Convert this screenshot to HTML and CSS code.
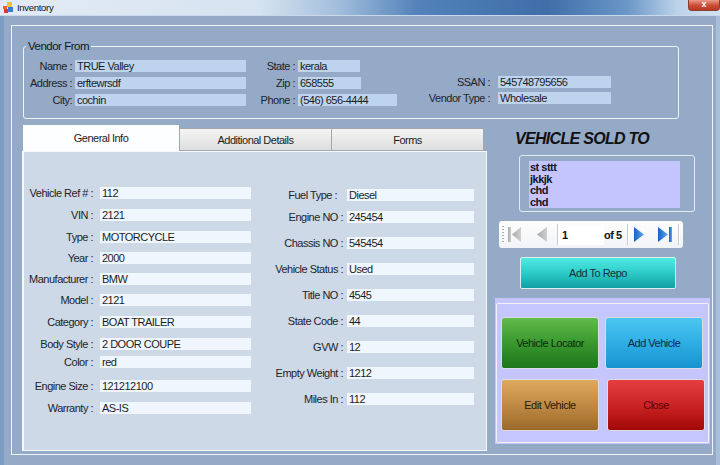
FILE: index.html
```html
<!DOCTYPE html>
<html>
<head>
<meta charset="utf-8">
<title>Inventory</title>
<link rel="stylesheet" href="styles.css">
</head>
<body>
<div class="window">
  <div class="titlebar">
    <svg class="appicon" width="11" height="11" viewBox="0 0 11 11">
      <rect x="0" y="4" width="4" height="3" fill="#e8602a"/>
      <rect x="4" y="0" width="5" height="5" fill="#f2c230"/>
      <rect x="1" y="7" width="4" height="4" fill="#d83a2a"/>
      <rect x="5" y="5" width="5" height="5" fill="#3a7ad8"/>
    </svg>
    <span class="title">Inventory</span>
    <div class="closebtn">x</div>
  </div>
  <div class="client">
    <div class="panel">
      <div class="group">
        <div class="legend">Vendor From</div>
        <div class="vrows">
          <div class="vcol c1">
            <span class="lbl">Name :</span><span class="vf">TRUE Valley</span>
            <span class="lbl">Address :</span><span class="vf">erftewrsdf</span>
            <span class="lbl">City:</span><span class="vf">cochin</span>
          </div>
          <div class="vcol c2">
            <span class="lbl">State :</span><span class="vf w62">kerala</span>
            <span class="lbl">Zip :</span><span class="vf w63">658555</span>
            <span class="lbl">Phone :</span><span class="vf w99">(546) 656-4444</span>
          </div>
          <div class="vcol c3">
            <span class="lbl">SSAN :</span><span class="vf">545748795656</span>
            <span class="lbl">Vendor Type :</span><span class="vf">Wholesale</span>
          </div>
        </div>
      </div>

      <div class="main">
        <div class="tabctl">
          <div class="tabstrip">
            <div class="tab active">General Info</div>
            <div class="tab t2">Additional Details</div>
            <div class="tab t3">Forms</div>
          </div>
          <div class="tabpage">
            <div class="pcol left">
              <div class="prow"><span class="plbl">Vehicle Ref # :</span><span class="pf">112</span></div>
              <div class="prow"><span class="plbl">VIN :</span><span class="pf">2121</span></div>
              <div class="prow"><span class="plbl">Type :</span><span class="pf">MOTORCYCLE</span></div>
              <div class="prow up1"><span class="plbl">Year :</span><span class="pf">2000</span></div>
              <div class="prow up1"><span class="plbl">Manufacturer :</span><span class="pf">BMW</span></div>
              <div class="prow up1"><span class="plbl">Model :</span><span class="pf">2121</span></div>
              <div class="prow"><span class="plbl">Category :</span><span class="pf">BOAT TRAILER</span></div>
              <div class="prow"><span class="plbl">Body Style :</span><span class="pf">2 DOOR COUPE</span></div>
              <div class="prow up4"><span class="plbl">Color :</span><span class="pf">red</span></div>
              <div class="prow dn2"><span class="plbl">Engine Size :</span><span class="pf">121212100</span></div>
              <div class="prow"><span class="plbl">Warranty :</span><span class="pf">AS-IS</span></div>
            </div>
            <div class="pcol right">
              <div class="prow"><span class="plbl pr">Fuel Type :</span><span class="pf">Diesel</span></div>
              <div class="prow up4"><span class="plbl">Engine NO :</span><span class="pf">245454</span></div>
              <div class="prow"><span class="plbl">Chassis NO :</span><span class="pf">545454</span></div>
              <div class="prow"><span class="plbl">Vehicle Status :</span><span class="pf">Used</span></div>
              <div class="prow"><span class="plbl">Title NO :</span><span class="pf">4545</span></div>
              <div class="prow"><span class="plbl">State Code :</span><span class="pf">44</span></div>
              <div class="prow"><span class="plbl">GVW :</span><span class="pf">12</span></div>
              <div class="prow"><span class="plbl">Empty Weight :</span><span class="pf">1212</span></div>
              <div class="prow"><span class="plbl">Miles In :</span><span class="pf">112</span></div>
            </div>
          </div>
        </div>

        <div class="side">
          <div class="sold">VEHICLE SOLD TO</div>
          <div class="listgrp">
            <div class="list">
              <div>st sttt</div>
              <div>jkkjk</div>
              <div>chd</div>
              <div>chd</div>
            </div>
          </div>
          <div class="nav">
            <span class="grip"></span>
            <svg class="ic first" width="14" height="15" viewBox="0 0 14 15">
              <defs><linearGradient id="g1" x1="0" y1="0" x2="1" y2="0"><stop offset="0" stop-color="#a9a9a9"/><stop offset="1" stop-color="#cfcfcf"/></linearGradient></defs>
              <rect x="0" y="0" width="3" height="15" fill="url(#g1)"/>
              <polygon points="13,0 4,7.5 13,15" fill="url(#g1)"/>
            </svg>
            <svg class="ic prev" width="10" height="15" viewBox="0 0 10 15">
              <polygon points="10,0 0,7.5 10,15" fill="url(#g1)"/>
            </svg>
            <span class="sep"></span>
            <span class="pos">1</span>
            <span class="of">of 5</span>
            <span class="sep s2"></span>
            <svg class="ic next" width="10" height="15" viewBox="0 0 10 15">
              <defs><linearGradient id="g2" x1="0" y1="0" x2="1" y2="0"><stop offset="0" stop-color="#1c5fc0"/><stop offset="1" stop-color="#5aa8ee"/></linearGradient></defs>
              <polygon points="0,0 10,7.5 0,15" fill="url(#g2)"/>
            </svg>
            <svg class="ic last" width="14" height="15" viewBox="0 0 14 15">
              <polygon points="0,0 10,7.5 0,15" fill="url(#g2)"/>
              <rect x="11" y="0" width="3" height="15" fill="url(#g2)"/>
            </svg>
            <span class="sep s3"></span>
          </div>
          <div class="addrepo">Add To Repo</div>
          <div class="btnpanel">
            <div class="btngrid">
              <div class="btn green">Vehicle Locator</div>
              <div class="btn blue">Add Vehicle</div>
              <div class="btn tan">Edit Vehicle</div>
              <div class="btn red">Close</div>
            </div>
          </div>
        </div>
      </div>
    </div>
  </div>
</div>
</body>
</html>
```

FILE: styles.css
```css
* { box-sizing: border-box; }

html, body {
  margin: 0;
  padding: 0;
}

body {
  width: 720px;
  height: 465px;
  overflow: hidden;
  font-family: "Liberation Sans", Arial, sans-serif;
  font-size: 11px;
  letter-spacing: -0.5px;
  color: #1c1c1c;
  background: #95aac7;
}

.window {
  width: 720px;
  height: 465px;
  display: flex;
  flex-direction: column;
}

/* ---------- title bar ---------- */
.titlebar {
  height: 16px;
  flex: none;
  display: flex;
  align-items: center;
  background: linear-gradient(90deg, #e2ebf5 0%, #d6e3f0 36%, #a2bedd 47%, #5282b9 58%, #3f6ea8 76%, #6a96c8 87%, #bcd2ea 94%, #d3e2f1 100%);
  border-bottom: 1px solid #c9d8ea;
}

.appicon {
  margin-left: 3px;
  flex: none;
}

.title {
  margin-left: 3px;
  font-size: 9.5px;
  letter-spacing: -0.3px;
  color: #111;
}

.closebtn {
  margin-left: auto;
  align-self: flex-start;
  width: 32px;
  height: 11px;
  border: 1px solid #8c3c2c;
  border-top: none;
  border-radius: 0 0 4px 4px;
  background: linear-gradient(#e89a86, #cc4c36 55%, #b63a24);
  color: #fff;
  font-weight: bold;
  font-size: 9px;
  line-height: 9px;
  text-align: center;
  letter-spacing: 0;
}

/* ---------- client area ---------- */
.client {
  flex: 1;
  background: #95aac7;
  border-left: 4px solid #7f9dc3;
  border-right: 4px solid #a8bfd9;
  padding-top: 9px;
}

.panel {
  margin-left: 7px;
  width: 702px;
  border: 1px solid #eef3f8;
  padding-bottom: 3px;
}

/* ---------- vendor group ---------- */
.group {
  margin: 20px 0 0 11px;
  width: 656px;
  border: 1px solid #eef3f8;
  border-radius: 3px;
  padding-bottom: 12px;
}

.legend {
  width: max-content;
  height: 13px;
  line-height: 13px;
  margin: -7px 0 0 2px;
  padding: 0 2px;
  background: #95aac7;
  color: #141414;
  font-size: 11.5px;
}

.vrows {
  margin-top: 7px;
  display: flex;
  align-items: flex-start;
}

.vcol {
  display: grid;
  grid-auto-rows: 12px;
  row-gap: 5px;
  column-gap: 3px;
  align-items: center;
}

.c1 { grid-template-columns: 48px 171px; }
.c2 { grid-template-columns: 45px 99px; margin-left: 4px; }
.c3 { grid-template-columns: 70px 113px; column-gap: 8px; row-gap: 4px; margin-left: 23px; margin-top: 16px; }

.lbl {
  text-align: right;
  white-space: nowrap;
  line-height: 12px;
  color: #1e232a;
}

.vf {
  height: 12px;
  line-height: 12px;
  padding-left: 2px;
  background: #bdd3ee;
  white-space: nowrap;
  color: #1a1e24;
}

.w62 { width: 62px; }
.w63 { width: 63px; }
.w99 { width: 99px; }

/* ---------- main row ---------- */
.main {
  display: flex;
  align-items: flex-start;
}

.tabctl {
  margin: 6px 0 0 10px;
  width: 465px;
  flex: none;
}

.tabstrip {
  height: 26px;
  display: flex;
  align-items: flex-end;
  padding-left: 1px;
}

.tab {
  height: 23px;
  display: flex;
  align-items: center;
  justify-content: center;
  color: #1c1c1c;
  padding-top: 1px;
}

.tab.active {
  width: 156px;
  height: 26px;
  background: #fdfeff;
  padding-top: 0;
}

.tab.t2 {
  width: 153px;
  border: 1px solid #a3a6aa;
  background: linear-gradient(#f4f4f4, #dedede);
}

.tab.t3 {
  width: 152px;
  border: 1px solid #a3a6aa;
  border-left: none;
  background: linear-gradient(#f4f4f4, #dedede);
}

.tabpage {
  height: 300px;
  background: #cdd9e6;
  border: 1px solid #f6f9fc;
  border-left: 2px solid #f6f9fc;
  padding: 35px 0 0 1px;
  display: flex;
  align-items: flex-start;
}

.pcol {
  display: flex;
  flex-direction: column;
  gap: 10px;
}

.pcol.right {
  gap: 14px;
  margin: 2px 0 0 12px;
}

.prow {
  height: 12px;
  display: flex;
  align-items: center;
}

.up1 { margin-top: -1px; }
.up4 { margin-top: -4px; }
.dn2 { margin-top: 2px; }

.plbl {
  width: 68px;
  text-align: right;
  white-space: nowrap;
  line-height: 12px;
  color: #1e232a;
}

.pf {
  width: 151px;
  margin-left: 7px;
  height: 12px;
  line-height: 12px;
  padding-left: 2px;
  background: #eff6fd;
  white-space: nowrap;
  color: #1a1e24;
}

.right .plbl { width: 80px; }
.right .plbl.pr { padding-right: 6px; }
.right .pf { width: 127px; margin-left: 4px; }

/* ---------- side panel ---------- */
.side {
  flex: 1;
}

.sold {
  margin: 11px 0 0 28px;
  font-size: 16px;
  font-weight: bold;
  font-style: italic;
  letter-spacing: -0.7px;
  line-height: 18px;
  color: #111;
}

.listgrp {
  margin: 7px 0 0 32px;
  width: 176px;
  height: 57px;
  border: 1px solid #e2e9f2;
  border-radius: 3px;
  padding: 5px 0 0 9px;
}

.list {
  width: 151px;
  height: 47px;
  background: #c4c4ff;
  padding: 1px 0 0 1px;
  font-weight: bold;
  line-height: 11.5px;
  color: #14141e;
}

.nav {
  margin: 9px 0 0 12px;
  width: 184px;
  height: 27px;
  border-radius: 3px;
  background: linear-gradient(#fefefe, #f1f3f6);
  display: flex;
  align-items: center;
}

.grip {
  margin-left: 3px;
  width: 2px;
  height: 17px;
  background: repeating-linear-gradient(#a8adb4 0 1px, transparent 1px 3px);
}

.ic { flex: none; display: block; }
.first { margin-left: 4px; }
.prev { margin-left: 15px; }
.next { margin-left: 6px; }
.last { margin-left: 14px; }

.sep {
  margin-left: 10px;
  width: 1px;
  height: 21px;
  background: #c6cbd2;
  box-shadow: 1px 0 0 #ffffff;
}

.sep.s2 { margin-left: 3px; }
.sep.s3 { margin-left: 6px; }

.pos {
  margin-left: 1px;
  width: 45px;
  height: 20px;
  line-height: 20px;
  padding-left: 3px;
  background: #ffffff;
  font-weight: bold;
  color: #111;
}

.of {
  width: 20px;
  font-weight: bold;
  color: #111;
  white-space: nowrap;
}

.addrepo {
  margin: 9px 0 0 33px;
  width: 156px;
  height: 32px;
  border: 1px solid #dcefef;
  border-radius: 2px;
  background: linear-gradient(#52eae4, #2ccbc8 50%, #129ea4);
  display: flex;
  align-items: center;
  justify-content: center;
  color: #16303a;
}

.btnpanel {
  margin: 9px 0 0 8px;
  width: 215px;
  height: 146px;
  background: #c6c6ff;
  padding: 5px 1px 1px 1px;
}

.btngrid {
  height: 100%;
  border: 1px solid #f0f0ff;
  border-radius: 2px;
  display: grid;
  grid-template-columns: 98px 98px;
  grid-template-rows: 52px 52px;
  column-gap: 6px;
  row-gap: 10px;
  padding: 13px 0 0 4px;
}

.btn {
  width: 98px;
  height: 52px;
  border: 1px solid #dcdce6;
  border-radius: 3px;
  display: flex;
  align-items: center;
  justify-content: center;
}

.green { background: linear-gradient(#62bb4a, #3a982e 50%, #1c761c); color: #0c2a0c; }
.blue  { background: linear-gradient(#4cc6f2, #2eaee4 50%, #1694d0); color: #0c2a48; }
.tan   { background: linear-gradient(#dcaa5e, #c08a44 50%, #9a6a2a); color: #2a1a08; }
.red   { background: linear-gradient(#e43e3e, #cc2424 50%, #a20808); color: #5a0000; margin-left: 2px; }
```
